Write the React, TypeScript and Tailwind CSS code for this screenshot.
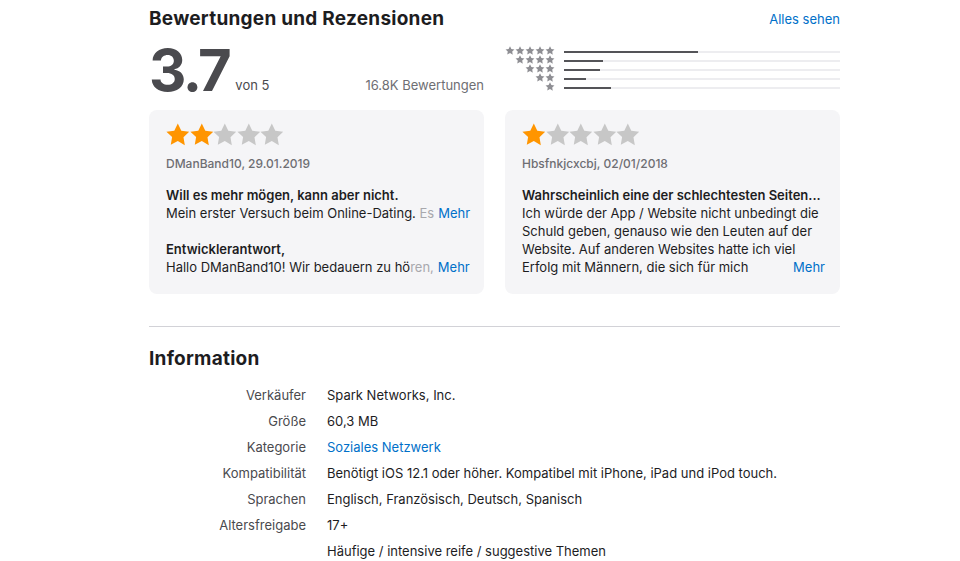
import React from "react";

const STAR =
  "M12 .587l3.668 7.431 8.2 1.192-5.934 5.787 1.4 8.168L12 18.896l-7.334 3.857 1.4-8.168L.132 9.21l8.2-1.192z";

function Star({ className }: { className: string }) {
  return (
    <svg viewBox="0 0 24 24" className={className}>
      <path d={STAR} fill="currentColor" />
    </svg>
  );
}

const histogram = [
  { stars: 5, pct: 48.5 },
  { stars: 4, pct: 14 },
  { stars: 3, pct: 13 },
  { stars: 2, pct: 8 },
  { stars: 1, pct: 17 },
];

type Line = { text: string; fade?: string };

type Review = {
  rating: number;
  author: string;
  title: string;
  body: Line[];
  response?: { title: string; body: Line };
};

const reviews: Review[] = [
  {
    rating: 2,
    author: "DManBand10, 29.01.2019",
    title: "Will es mehr mögen, kann aber nicht.",
    body: [{ text: "Mein erster Versuch beim Online-Dating. ", fade: "Es" }],
    response: {
      title: "Entwicklerantwort,",
      body: { text: "Hallo DManBand10! Wir bedauern zu hö", fade: "ren," },
    },
  },
  {
    rating: 1,
    author: "Hbsfnkjcxcbj, 02/01/2018",
    title: "Wahrscheinlich eine der schlechtesten Seiten...",
    body: [
      { text: "Ich würde der App / Website nicht unbedingt die" },
      { text: "Schuld geben, genauso wie den Leuten auf der" },
      { text: "Website. Auf anderen Websites hatte ich viel" },
      { text: "Erfolg mit Männern, die sich für mich" },
    ],
  },
];

const info: [string, string, boolean?][] = [
  ["Verkäufer", "Spark Networks, Inc."],
  ["Größe", "60,3 MB"],
  ["Kategorie", "Soziales Netzwerk", true],
  ["Kompatibilität", "Benötigt iOS 12.1 oder höher. Kompatibel mit iPhone, iPad und iPod touch."],
  ["Sprachen", "Englisch, Französisch, Deutsch, Spanisch"],
  ["Altersfreigabe", "17+"],
  ["", "Häufige / intensive reife / suggestive Themen"],
];

function TextLine({ line, more }: { line: Line; more: boolean }) {
  return (
    <div className="flex justify-between">
      <span className="whitespace-nowrap">
        {line.text}
        {line.fade && <span className="text-[#a8a8ad]">{line.fade}</span>}
      </span>
      {more && <span className="shrink-0 pl-1 text-[#0070c9]">Mehr</span>}
    </div>
  );
}

function ReviewCard({ r }: { r: Review }) {
  return (
    <div className="h-[184px] rounded-lg bg-[#f5f5f7] pl-[17px] pr-[15px] pt-[13px]">
      <div className="flex">
        {[0, 1, 2, 3, 4].map((i) => (
          <Star
            key={i}
            className={`h-[23px] w-[23.6px] ${i < r.rating ? "text-[#ff9500]" : "text-[#c7c7c7]"}`}
          />
        ))}
      </div>
      <div className="mt-[9px] text-[12px] font-medium text-[#6e6e73]">{r.author}</div>
      <div className="mt-[13px] text-[13px] leading-[18px] text-[#1d1d1f]">
        <div className="font-semibold">{r.title}</div>
        {r.body.map((line, i) => (
          <TextLine key={i} line={line} more={i === r.body.length - 1} />
        ))}
        {r.response && (
          <>
            <div className="mt-[18px] font-semibold">{r.response.title}</div>
            <TextLine line={r.response.body} more />
          </>
        )}
      </div>
    </div>
  );
}

export default function App() {
  return (
    <div className="min-h-[561px] bg-white font-['Inter',sans-serif] antialiased">
      <div className="ml-[149px] w-[691px] pt-[5px]">
        {/* Ratings header */}
        <div className="flex items-center justify-between">
          <h2 className="text-[19px] font-bold tracking-[0.25px] text-[#1d1d1f]">
            Bewertungen und Rezensionen
          </h2>
          <a className="text-[13px] text-[#0070c9]">Alles sehen</a>
        </div>

        <div className="mt-[11px] flex">
          <div className="flex w-[335px] items-end">
            <span className="text-[58px] font-bold leading-[50px] tracking-[-2.5px] text-[#4a4a4e]">
              3.7
            </span>
            <span className="mb-[-1px] ml-[6px] text-[13px] text-[#4a4a4e]">von 5</span>
            <span className="mb-[-1px] ml-auto text-[13px] text-[#6e6e73]">16.8K Bewertungen</span>
          </div>
          <div className="ml-[21px] mt-[1px] flex flex-1 flex-col">
            {histogram.map((h) => (
              <div key={h.stars} className="flex h-[9px] items-center">
                <div className="flex w-[50px] justify-end">
                  {Array.from({ length: h.stars }).map((_, i) => (
                    <Star key={i} className="h-[9px] w-[10px] text-[#8e8e93]" />
                  ))}
                </div>
                <div className="ml-[9px] mt-[3px] h-[2px] flex-1 bg-[#ededf0]">
                  <div className="h-full bg-[#545458]" style={{ width: `${h.pct}%` }} />
                </div>
              </div>
            ))}
          </div>
        </div>

        {/* Reviews */}
        <div className="mt-[15px] grid grid-cols-2 gap-[21px]">
          {reviews.map((r) => (
            <ReviewCard key={r.author} r={r} />
          ))}
        </div>

        <div className="mt-[32px] h-px bg-[#d2d2d7]" />

        {/* Information */}
        <h2 className="mt-[18px] text-[19px] font-bold tracking-[0.25px] text-[#1d1d1f]">
          Information
        </h2>
        <dl className="mt-[10px] text-[13px] text-[#1d1d1f]">
          {info.map(([k, v, link], i) => (
            <div key={i} className="flex h-[26px] items-center">
              <dt className="w-[157px] text-right text-[#4a4a4e]">{k}</dt>
              <dd className={`ml-[21px] ${link ? "text-[#0070c9]" : ""}`}>{v}</dd>
            </div>
          ))}
        </dl>
      </div>
    </div>
  );
}
